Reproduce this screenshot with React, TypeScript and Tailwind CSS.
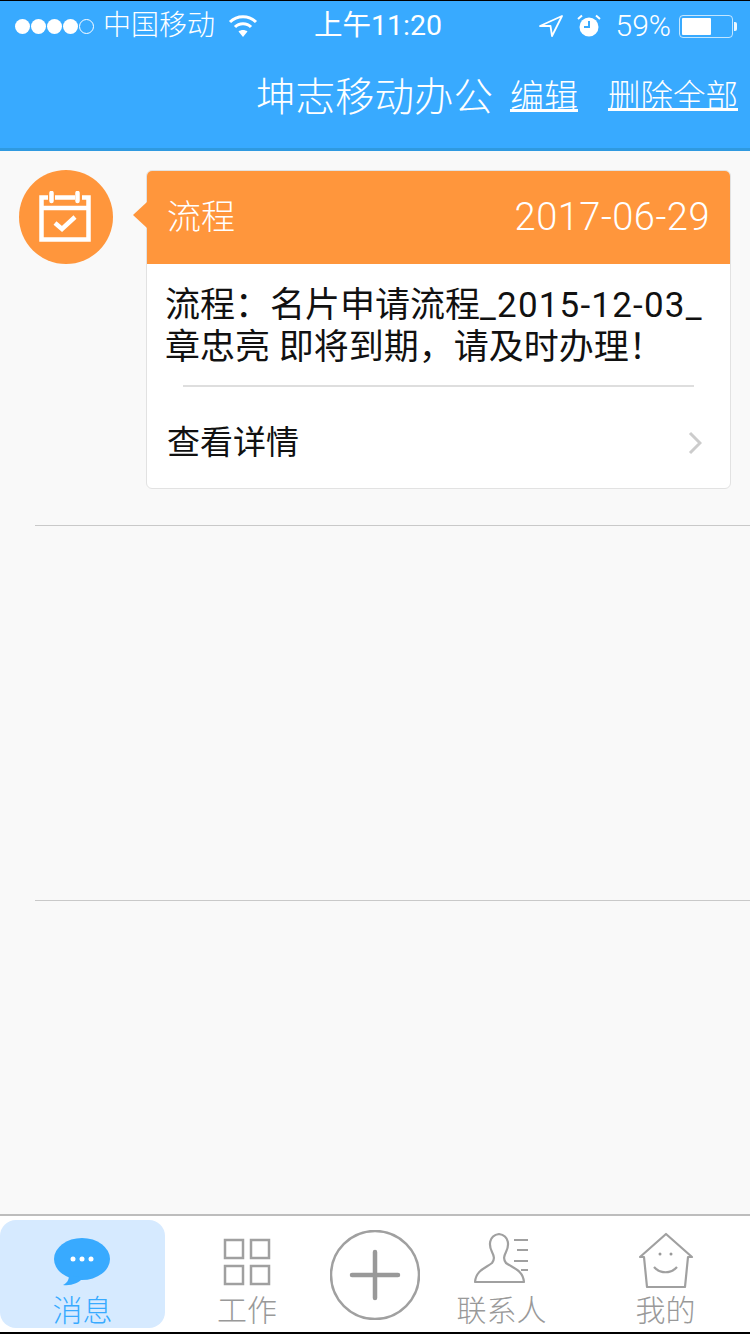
const font = { fontFamily: 'Roboto, "Noto Sans CJK SC", "Liberation Sans", sans-serif' }

function StatusBar() {
  return (
    <div className="flex h-[50px] items-center pl-[15px] pr-[13px] text-[28px] leading-none text-white">
      <div className="flex items-center gap-[1px]">
        <span className="h-[15px] w-[15px] rounded-full bg-white" />
        <span className="h-[15px] w-[15px] rounded-full bg-white" />
        <span className="h-[15px] w-[15px] rounded-full bg-white" />
        <span className="h-[15px] w-[15px] rounded-full bg-white" />
        <span className="h-[15px] w-[15px] rounded-full border border-white" />
      </div>
      <span className="ml-[9px] font-light">中国移动</span>
      <svg className="ml-[13px]" width="30" height="24" viewBox="0 0 30 24" fill="none" stroke="white" strokeWidth="3">
        <path d="M2 8 C9 1 21 1 28 8" />
        <path d="M7 13 C11 8.500 19 8.500 23 13" />
        <path d="M15 23 L10.500 17.500 C13 15.500 17 15.500 19.500 17.500 Z" fill="white" stroke="none" />
      </svg>
      <span className="ml-[56px] text-[28.500px]">上午11:20</span>
      <div className="ml-auto flex items-center">
        <svg width="26" height="24" viewBox="0 0 26 24" fill="none" stroke="white" strokeWidth="1.800">
          <path d="M2 12 L24 2 L14 22 L12.500 12 Z" strokeLinejoin="round" />
        </svg>
        <svg className="ml-[13px]" width="24" height="24" viewBox="0 0 24 24" fill="white">
          <circle cx="12" cy="13" r="9.500" />
          <path d="M12 7 V13 H7" stroke="#38aaff" strokeWidth="2" fill="none" />
          <path d="M1 5 L5 1.500 M23 5 L19 1.500" stroke="white" strokeWidth="2" fill="none" />
        </svg>
        <span className="ml-[15px] text-[30px] font-light">59%</span>
        <div className="ml-[8px] flex h-[23px] w-[54px] items-center rounded-[4px] border border-white/70 p-[2px]">
          <div className="h-full w-[29px] rounded-[1px] bg-white" />
        </div>
        <div className="ml-[1px] h-[9px] w-[3px] rounded-r-[2px] bg-white/90" />
      </div>
    </div>
  )
}

function Header() {
  return (
    <header className="border-b-[3px] border-[#2f9ae0] bg-[#38aaff]">
      <StatusBar />
      <div className="flex h-[97px] items-start justify-end pr-[12px] pt-[23px] text-white">
        <span className="text-[39.500px] font-light leading-[48px]">坤志移动办公</span>
        <span className="ml-[17px] mt-[2px] text-[34px] font-light leading-[42px] underline underline-offset-[0px]">编辑</span>
        <span className="ml-[30px] mt-[2px] text-[32.500px] font-light leading-[42px] underline underline-offset-[0px]">删除全部</span>
      </div>
    </header>
  )
}

function MessageCard() {
  return (
    <div className="flex items-start pl-[19px] pr-[19px] pt-[19px]">
      <div className="flex h-[94px] w-[94px] shrink-0 items-center justify-center rounded-full bg-[#ff963c]">
        <svg className="-translate-x-px" width="52" height="52" viewBox="0 0 52 52" fill="none" stroke="white">
          <path d="M9 6.500 H2.500 V48.500 H49.500 V6.500 H43 M16 6.500 H36" strokeWidth="4.500" />
          <path d="M2.500 17 H49.500" strokeWidth="4.500" />
          <path d="M12.500 2 V10 M38.500 2 V10" strokeWidth="4.500" strokeLinecap="round" />
          <path d="M16 32 L23 38 L36 26" strokeWidth="4.500" />
        </svg>
      </div>
      <div className="relative ml-[33px] flex-1">
        <div className="absolute -left-[13px] top-[32px] h-0 w-0 border-y-[13px] border-r-[14px] border-y-transparent border-r-[#ff963c]" />
        <div className="overflow-hidden rounded-[6px] border border-[#e2e2e2] bg-white">
          <div className="-mx-px -mt-px flex h-[94px] items-center justify-between bg-[#ff963c] px-[21px] text-[34px] font-light text-white">
            <span>流程</span>
            <span className="text-[38px] tracking-[0.5px]">2017-06-29</span>
          </div>
          <p className="whitespace-nowrap pl-[18px] pr-[10px] pt-[21px] text-[35px] leading-[42px] text-[#111]">
            流程：名片申请流程<span className="tracking-[1.200px]">_2015-12-03_</span>
            <br />
            章忠亮 即将到期，请及时办理！
          </p>
          <div className="mx-[36px] mt-[16px] h-[2px] bg-[#dedede]" />
          <div className="flex h-[101px] items-center justify-between pl-[20px] pr-[28px] pt-[10px] text-[33px] text-[#111]">
            <span>查看详情</span>
            <svg width="14" height="24" viewBox="0 0 14 24" fill="none" stroke="#cccccc" strokeWidth="3">
              <path d="M2 2 L12 12 L2 22" />
            </svg>
          </div>
        </div>
      </div>
    </div>
  )
}

function TabBar() {
  return (
    <nav className="flex h-[120px] border-t-2 border-b-2 border-t-[#bdbdbd] border-b-black bg-white">
      <div className="mt-[4px] flex h-[108px] w-[165px] flex-col items-center rounded-[16px] bg-[#d6eaff] pt-[18px]">
        <svg className="shrink-0" width="58" height="48" viewBox="0 0 58 48">
          <ellipse cx="28" cy="21" rx="28" ry="21" fill="#38aaff" />
          <path d="M15 37 C15 42 13 45 9 47 C17 48 25 45 29 40 Z" fill="#38aaff" />
          <circle cx="19" cy="21" r="2.500" fill="white" />
          <circle cx="28" cy="21" r="2.500" fill="white" />
          <circle cx="37" cy="21" r="2.500" fill="white" />
        </svg>
        <span className="mt-[8px] text-[30px] font-light leading-[34px] text-[#38aaff]">消息</span>
      </div>
      <div className="flex w-[164px] flex-col items-center pt-[22px]">
        <svg className="shrink-0" width="48" height="48" viewBox="0 0 48 48" fill="none" stroke="#a0a0a0" strokeWidth="2.500">
          <rect x="2" y="2" width="18" height="18" />
          <rect x="28" y="2" width="18" height="18" />
          <rect x="2" y="28" width="18" height="18" />
          <rect x="28" y="28" width="18" height="18" />
        </svg>
        <span className="mt-[8px] text-[30px] font-light leading-[34px] text-[#999]">工作</span>
      </div>
      <div className="ml-px flex items-start pt-[14px]">
        <svg width="90" height="90" viewBox="0 0 90 90" fill="none" stroke="#a0a0a0">
          <circle cx="45" cy="45" r="44" strokeWidth="2.500" />
          <path d="M22 45 H68 M45 22 V68" stroke="#999999" strokeWidth="4.500" strokeLinecap="round" />
        </svg>
      </div>
      <div className="ml-[2px] flex w-[159px] flex-col items-center pt-[16px]">
        <svg className="shrink-0" width="58" height="54" viewBox="0 0 58 54" fill="none" stroke="#a0a0a0" strokeWidth="2.200">
          <path d="M19 20 C16 14 15 4 26 2 C37 4 36 14 33 20 C31 24 30 27 33 31 C40 36 50 38 51 50 H2 C3 38 13 36 19 31 C22 27 21 24 19 20 Z" strokeLinejoin="round" />
          <path d="M41 8 H55 M44 18 H55 M41 29 H55 M48 38 H55" />
        </svg>
        <span className="mt-[8px] text-[30px] font-light leading-[34px] text-[#999]">联系人</span>
      </div>
      <div className="flex flex-1 flex-col items-center pt-[16px]">
        <svg className="shrink-0" width="56" height="56" viewBox="0 0 56 56" fill="none" stroke="#a0a0a0" strokeWidth="2.200">
          <path d="M28 2 L54 25 L50 25 L47 55 H9 L6 25 L2 25 Z" strokeLinejoin="round" />
          <circle cx="22" cy="22" r="1.500" fill="#999999" stroke="none" />
          <circle cx="33" cy="22" r="1.500" fill="#999999" stroke="none" />
          <path d="M16 35 C22 42 33 42 39 35" />
        </svg>
        <span className="mt-[6px] text-[30px] font-light leading-[34px] text-[#999]">我的</span>
      </div>
    </nav>
  )
}

export default function App() {
  return (
    <div className="flex h-[1334px] w-[750px] flex-col overflow-hidden border-t border-black bg-[#f9f9f9]" style={font}>
      <Header />
      <main className="flex-1">
        <section className="h-[374px]">
          <MessageCard />
        </section>
        <div className="ml-[35px] h-px bg-[#c9c9c9]" />
        <div className="h-[374px]" />
        <div className="ml-[35px] h-px bg-[#c9c9c9]" />
      </main>
      <TabBar />
    </div>
  )
}
